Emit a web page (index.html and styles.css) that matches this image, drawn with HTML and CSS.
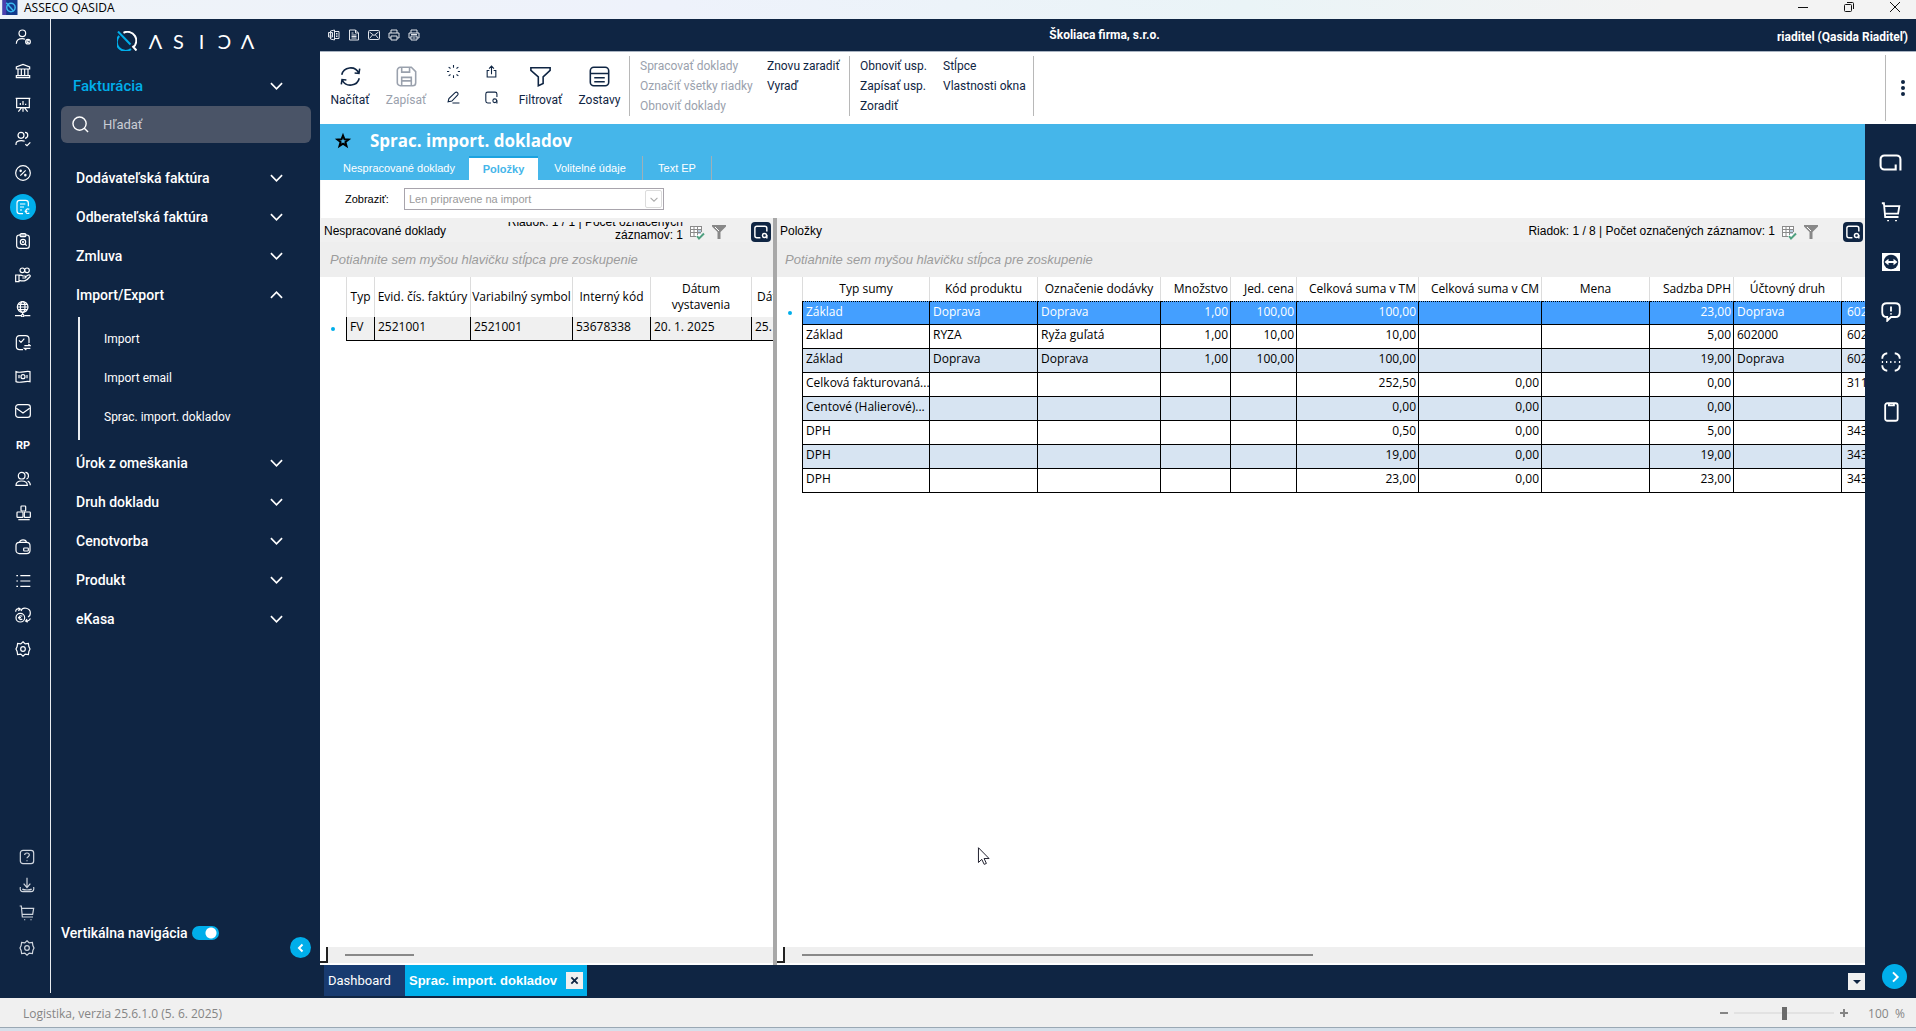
FILE: index.html
```html
<!DOCTYPE html>
<html lang="sk">
<head>
<meta charset="utf-8">
<title>ASSECO QASIDA</title>
<link rel="stylesheet" href="styles.css">
</head>
<body>
<svg class="sprite" aria-hidden="true">
  <symbol id="chev" viewBox="0 0 14 8"><path d="M1 1l6 6 6-6"/></symbol>
  <symbol id="q" viewBox="0 0 20 20"><path d="M2.200 5A8.800 8.800 0 0 0 14 18" stroke="#00aeea" stroke-width="2"/><path d="M1 .5l12.500 13" stroke="#00aeea" stroke-width="2"/><path d="M6.500 1.800A8.800 8.800 0 0 1 16 16.500M15.500 15l4 4.500" stroke="#fff" stroke-width="2"/></symbol>
  <symbol id="i-user" viewBox="0 0 24 24"><circle cx="11" cy="6.500" r="5"/><path d="M2 22c0-5 4-7.500 9-7.500 2 0 3 .3 4 .8"/><circle cx="19.500" cy="19" r="3.500"/><path d="M21 18c-1.500-1.500-3 0-3 1s1.500 2.500 3 1"/></symbol>
  <symbol id="i-bank" viewBox="0 0 24 24"><path d="M2 9V6l10-4 10 4v3zM2 22h20v-3H2zM4.500 19V9M9.500 19V9M14.500 19V9M19.500 19V9"/></symbol>
  <symbol id="i-board" viewBox="0 0 24 24"><path d="M1 2h22M2.500 2v14h19V2M12 16v6M5 22l5-6M19 22l-5-6M8 12V9M12 12V6M16 12v-2"/></symbol>
  <symbol id="i-usercheck" viewBox="0 0 24 24"><circle cx="9" cy="6.500" r="4.500"/><path d="M1.500 21v-1.500c0-3 3-5 8-5 3 0 4 .5 5 1M15 2c5 0 6 8 0 9M15.500 20l2.500 2 5-5"/></symbol>
  <symbol id="i-percent" viewBox="0 0 24 24"><circle cx="12" cy="12" r="11"/><path d="M8 16l8-8"/><circle cx="8.500" cy="8.800" r="1"/><circle cx="15.500" cy="15.200" r="1"/></symbol>
  <symbol id="i-inv" viewBox="0 0 24 24"><path d="M12 22H7c-3 0-4-1.500-4-4V6c0-3 1.500-4 4-4h9c3 0 4 1.500 4 4v5M7.500 7.500h8M7.500 12h6M7.500 16.500h3M21.500 15.500c-4-2-5.500 1-5.500 3s2 4.500 5.500 2.500M14.500 18.500h4"/></symbol>
  <symbol id="i-clip" viewBox="0 0 24 24"><rect x="2.500" y="3" width="19" height="20" rx="4"/><rect x="7.500" y="1" width="9" height="4.500" rx="2"/><circle cx="12" cy="13.500" r="4"/><path d="M15 16.500l2.500 2.500M10.500 13.500h3M12 12v3"/></symbol>
  <symbol id="i-hand" viewBox="0 0 24 24"><circle cx="11" cy="5" r="3.500"/><circle cx="18" cy="5" r="3.500"/><path d="M1 12h5v10H1zM6 13c3-2 5 0 6 .500h3c2 0 2 3 0 3h-4M15 15l5-3c2-1 4 1 2 3-5 6-8 7-16 5"/></symbol>
  <symbol id="i-globe" viewBox="0 0 24 24"><circle cx="11.500" cy="9" r="8"/><ellipse cx="11.500" cy="9" rx="3.500" ry="8"/><path d="M3.500 9h16M5 5h13M5 13h13M11.500 17v3M0 22h9M14 22h9"/><circle cx="11.500" cy="22" r="1.800"/></symbol>
  <symbol id="i-order" viewBox="0 0 24 24"><path d="M12 22H7c-3.500 0-5-1.500-5-5V6c0-3 1.500-5 5-5h9c3.500 0 5 2 5 5v6M6 8l3 3 5-5.500M14 16h9l-3-2.500M23 20h-9l3 2.500"/></symbol>
  <symbol id="i-cash" viewBox="0 0 24 24"><path d="M1.500 4c7 3 14-2 21 0v15c-7-2-14 3-21 0zM6 9v5M18 9v5"/><circle cx="12" cy="11.500" r="3"/></symbol>
  <symbol id="i-mail" viewBox="0 0 24 24"><rect x="1" y="2.500" width="22" height="19" rx="4"/><path d="M2 8l10 7 10-7"/></symbol>
  <symbol id="i-users" viewBox="0 0 24 24"><circle cx="10" cy="7" r="5"/><path d="M1.500 21.500c0-5 4-6.500 8.500-6.500s8.500 1.500 8.500 6.500zM15.500 2c6 0 6 9 1.500 10M19 15c3 1.500 4 3 4 6.500"/></symbol>
  <symbol id="i-boxes" viewBox="0 0 24 24"><rect x="9" y="1.500" width="7" height="7.500" rx="1"/><rect x="3" y="10.500" width="9" height="8" rx="1"/><rect x="14" y="10.500" width="9" height="8" rx="1"/><path d="M5 22h17"/></symbol>
  <symbol id="i-bag" viewBox="0 0 24 24"><rect x="1.500" y="5" width="21" height="17" rx="5"/><path d="M7 5c0-5 10-5 10 0"/><rect x="13" y="13.500" width="7" height="4.500" rx="1"/></symbol>
  <symbol id="i-list" viewBox="0 0 24 24"><path d="M8 4h15M8 12h15M8 20h15M2 4h2.500M2 12h2.500M2 20h2.500"/></symbol>
  <symbol id="i-swap" viewBox="0 0 24 24"><circle cx="8" cy="16" r="6.500"/><path d="M11 14c-3-2-5 0-5 2s2 4 5 2M4.500 16H9M9 6c2-7 14-5 14 3 0 3-1 5-3.500 6M1 7c0-3 2-5 6-4.500M5 1l3 2-3 2.500M16 21c3 0 6 0 7-4M18 18l-2 3 3 2"/></symbol>
  <symbol id="i-gear" viewBox="0 0 24 24"><circle cx="12" cy="12" r="3.500"/><path d="M12 1.200l3.300 3.200 4.800-.8.700 4.800L22.500 12l-1.700 3.600-.7 4.800-4.800-.8L12 22.800l-3.300-3.200-4.800.8-.7-4.800L1.500 12l1.700-3.600.7-4.800 4.800.8z"/></symbol>
  <symbol id="i-help" viewBox="0 0 24 24"><rect x="2" y="2" width="20" height="20" rx="4"/><path d="M8.500 9c0-4 7-4 7 0 0 2.500-3.500 2.500-3.500 5M12 17v1.500"/></symbol>
  <symbol id="i-down" viewBox="0 0 24 24"><path d="M12 1v14M7 10l5 6 5-6M2 15c-1 5 1 7 4 7h12c3 0 5-2 4-7M5 18c2 2 12 2 14 0"/></symbol>
  <symbol id="i-cart" viewBox="0 0 24 24"><path d="M1 1.500h2.500L5 18h16M4 5h18l-1.500 9H5"/><path d="M8.500 21.500v1.500M18 21.500v1.500"/></symbol>
  <symbol id="i-excel" viewBox="0 0 24 24"><path d="M13 2v20l-8-2V4zM13 5h9v14h-9M1 7h8v9H1zM3.500 9.500l3 4M6.500 9.500l-3 4M16 9h3M16 12h3M16 15h3"/></symbol>
  <symbol id="i-doc" viewBox="0 0 24 24"><path d="M3 2h12l6 6v14H3zM15 2v6h6M7 8h4M7 12h10M7 15h10M7 18h10"/></symbol>
  <symbol id="i-env" viewBox="0 0 24 24"><rect x="1" y="3" width="22" height="18" rx="2"/><path d="M3 6l9 7 9-7M3 19l6-7M21 19l-6-7"/></symbol>
  <symbol id="i-print" viewBox="0 0 24 24"><path d="M6 8V2h12v6M6 18H2V8h20v10h-4M6 14h12v8H6z"/></symbol>
  <symbol id="i-print2" viewBox="0 0 24 24"><path d="M6 8V2h12v6M6 18H2V8h20v10h-4M6 14h12v8H6zM9 18h6M6 11h12"/></symbol>
  <symbol id="i-reload" viewBox="0 0 24 24"><path d="M2 10C4 1 17-1 21.500 8M22.500 3l-.8 5.500-5-.500M22 14c-2 9-15 11-19.500 2M1.500 21l.8-5.500 5 .500"/></symbol>
  <symbol id="i-save" viewBox="0 0 24 24"><path d="M5 1.500h12.500l5 5V19a3.500 3.500 0 0 1-3.500 3.500H5A3.500 3.500 0 0 1 1.500 19V5A3.500 3.500 0 0 1 5 1.500zM6.500 2v5h9V2M6.500 22v-9h11v9M6.500 17h11"/></symbol>
  <symbol id="i-spin" viewBox="0 0 24 24"><path d="M12 0v5M12 19v5M0 12h4M20 12h4M3 4l3.500 2.500M17.500 6.500L21 4M3 20l3.500-2.500M17.500 17.500L21 20"/></symbol>
  <symbol id="i-share" viewBox="0 0 24 24"><path d="M8 10H4v12h16V10h-4M12 17V2M7.500 6.500L12 2l4.500 4.500"/></symbol>
  <symbol id="i-pen" viewBox="0 0 24 24"><path d="M2 20l1.500-6L15 3c3-2.500 7 1.500 4.500 4.500L9 18.500zM10 22h13"/></symbol>
  <symbol id="i-view" viewBox="0 0 24 24"><path d="M11 22H5c-2.500 0-3.500-1-3.500-3.500v-13C1.500 3 2.500 2 5 2h13.500C21 2 22 3 22 5.500V11"/><circle cx="18" cy="18" r="3.500"/><path d="M22 17v6"/></symbol>
  <symbol id="i-filter" viewBox="0 0 24 24"><path d="M1 2h22v3l-8 7.500V20l-5.500 2.500V12.500L1 5z"/></symbol>
  <symbol id="i-report" viewBox="0 0 24 24"><rect x="1.500" y="1.500" width="21" height="21" rx="4"/><path d="M2 8.500h20M6 13.500h12M6 18h12"/></symbol>
  <symbol id="i-grid" viewBox="0 0 16 16"><path d="M1 2h11v11H1z" fill="#fff" stroke="none"/><path d="M9 5h3v5H9z" fill="#b9cde0" stroke="none"/><path d="M1 2.500h12M1 5.500h12M1 8.500h11M1 12.500h6M1.500 2v11M5 2v11M8.500 2v9M12.500 2v6" stroke="#8a8a8a" stroke-width="1"/><path d="M8 12l2 2.500 5-5" stroke="#4fa080" stroke-width="2"/></symbol>
  <symbol id="i-funnel" viewBox="0 0 14 14"><path d="M0 0h14v1.500L8.500 7v7H5.500V7L0 1.500z" fill="#888" stroke="none"/><path d="M3 2l4 4" stroke="#fff" stroke-width="1"/></symbol>
  <symbol id="i-card" viewBox="0 0 24 18"><path d="M17.500 11v5.500H5.500a4 4 0 0 1-4-4v-7a4 4 0 0 1 4-4h13a4 4 0 0 1 4 4v12"/></symbol>
  <symbol id="i-tv" viewBox="0 0 18 18"><path d="M0 0h18v18H0z" fill="#fff" stroke="none"/><circle cx="9" cy="9" r="7.300" fill="#0f2543" stroke="none"/><path d="M2.500 9l4-3.200v2.200h5V5.800l4 3.200-4 3.200V10h-5v2.200z" fill="#fff" stroke="none"/></symbol>
  <symbol id="i-alert" viewBox="0 0 24 24"><path d="M7 1.500h10c4 0 5.500 1.500 5.500 5v6c0 4-1.500 5.500-5.500 5.500h-5l-4.500 4.500V18C3 18 1.500 16 1.500 12.500v-6c0-3.500 1.500-5 5.500-5zM12 5.500v6M12 13.500v1.500"/></symbol>
  <symbol id="i-scan" viewBox="0 0 24 24"><path d="M1.500 8c0-4 2-6 6-6.500M16.500 1.500c4 .5 6 2.500 6 6.500M22.500 16c0 4-2 6-6 6.500M7.500 22.500c-4-.5-6-2.500-6-6.500M1 12h1.500M6 12h1.500M11 12h1.500M16 12h1.500M21.500 12H23"/></symbol>
  <symbol id="i-phone" viewBox="0 0 24 24"><rect x="5" y="1.500" width="15" height="21" rx="2.500"/><path d="M9.500 2v2h6V2"/></symbol>
</svg>

<header class="titlebar">
  <svg class="app-icon" viewBox="0 0 16 16"><path d="M0 0h16v16H0z" fill="#123a8c"/><path d="M0 0h4v16H0z" fill="#4a3fae"/><circle cx="9" cy="8" r="4.500" fill="none" stroke="#39b8ee" stroke-width="1.500"/><path d="M4 3l8 9" stroke="#39b8ee" stroke-width="1.500"/></svg>
  <span class="app-name">ASSECO QASIDA</span>
  <button class="winbtn" aria-label="Minimalizovať"><svg viewBox="0 0 12 12"><path d="M1 6.500h10"/></svg></button>
  <button class="winbtn" aria-label="Obnoviť"><svg viewBox="0 0 12 12"><rect x="1.500" y="3.500" width="7" height="7" rx="1"/><path d="M4 1.500h5.500a1 1 0 0 1 1 1V8"/></svg></button>
  <button class="winbtn" aria-label="Zavrieť"><svg viewBox="0 0 12 12"><path d="M1 1l10 10M11 1L1 11"/></svg></button>
</header>

<div class="shell">
  <nav class="rail" aria-label="Moduly">
    <div class="rail-line">
      <button class="ric"><svg><use href="#i-user"/></svg></button>
      <button class="ric"><svg><use href="#i-bank"/></svg></button>
      <button class="ric"><svg><use href="#i-board"/></svg></button>
      <button class="ric"><svg><use href="#i-usercheck"/></svg></button>
      <button class="ric"><svg><use href="#i-percent"/></svg></button>
      <button class="ric active"><svg><use href="#i-inv"/></svg></button>
      <button class="ric"><svg><use href="#i-clip"/></svg></button>
      <button class="ric"><svg><use href="#i-hand"/></svg></button>
      <button class="ric"><svg><use href="#i-globe"/></svg></button>
      <button class="ric"><svg><use href="#i-order"/></svg></button>
      <button class="ric"><svg><use href="#i-cash"/></svg></button>
      <button class="ric"><svg><use href="#i-mail"/></svg></button>
      <button class="ric">RP</button>
      <button class="ric"><svg><use href="#i-users"/></svg></button>
      <button class="ric"><svg><use href="#i-boxes"/></svg></button>
      <button class="ric"><svg><use href="#i-bag"/></svg></button>
      <button class="ric"><svg><use href="#i-list"/></svg></button>
      <button class="ric"><svg><use href="#i-swap"/></svg></button>
      <button class="ric"><svg><use href="#i-gear"/></svg></button>
      <div class="rail-bottom">
        <button class="ric"><svg><use href="#i-help"/></svg></button>
        <button class="ric"><svg><use href="#i-down"/></svg></button>
        <button class="ric"><svg><use href="#i-cart"/></svg></button>
        <button class="ric last"><svg><use href="#i-gear"/></svg></button>
      </div>
    </div>
  </nav>

  <aside class="menu">
    <div class="logo" role="img" aria-label="QASIDA"><svg><use href="#q"/></svg><span>Λ</span><span>S</span><span>I</span><span>Ɔ</span><span>Λ</span></div>
    <button class="menu-title"><span>Fakturácia</span><svg class="chev"><use href="#chev"/></svg></button>
    <label class="search"><svg viewBox="0 0 18 18"><circle cx="8" cy="8" r="7"/><path d="M13 13l4 4"/></svg><input type="search" placeholder="Hľadať" aria-label="Hľadať"></label>
    <div class="menu-list">
      <button class="mi"><span>Dodávateľská faktúra</span><svg class="chev"><use href="#chev"/></svg></button>
      <button class="mi"><span>Odberateľská faktúra</span><svg class="chev"><use href="#chev"/></svg></button>
      <button class="mi"><span>Zmluva</span><svg class="chev"><use href="#chev"/></svg></button>
      <button class="mi"><span>Import/Export</span><svg class="chev up"><use href="#chev"/></svg></button>
      <div class="sub">
        <a href="#">Import</a>
        <a href="#">Import email</a>
        <a href="#">Sprac. import. dokladov</a>
      </div>
      <button class="mi"><span>Úrok z omeškania</span><svg class="chev"><use href="#chev"/></svg></button>
      <button class="mi"><span>Druh dokladu</span><svg class="chev"><use href="#chev"/></svg></button>
      <button class="mi"><span>Cenotvorba</span><svg class="chev"><use href="#chev"/></svg></button>
      <button class="mi"><span>Produkt</span><svg class="chev"><use href="#chev"/></svg></button>
      <button class="mi"><span>eKasa</span><svg class="chev"><use href="#chev"/></svg></button>
    </div>
    <div class="menu-foot">
      <label class="vnav"><span>Vertikálna navigácia</span><input type="checkbox" checked></label>
      <button class="round collapse" aria-label="Zbaliť"><svg viewBox="0 0 12 12"><path d="M7.500 2.500L4 6l3.500 3.500"/></svg></button>
    </div>
  </aside>

  <div class="work">
    <div class="topbar">
      <div class="quick">
        <button><svg><use href="#i-excel"/></svg></button><button><svg><use href="#i-doc"/></svg></button><button><svg><use href="#i-env"/></svg></button><button><svg><use href="#i-print"/></svg></button><button><svg><use href="#i-print2"/></svg></button>
      </div>
      <div class="firm">Školiaca firma, s.r.o.</div>
      <div class="who">riaditel (Qasida Riaditeľ)</div>
    </div>

    <div class="toolbar">
      <button class="big"><svg><use href="#i-reload"/></svg><span>Načítať</span></button>
      <button class="big off" disabled><svg><use href="#i-save"/></svg><span>Zapísať</span></button>
      <div class="smalls">
        <button><svg><use href="#i-spin"/></svg></button><button><svg><use href="#i-share"/></svg></button>
        <button><svg><use href="#i-pen"/></svg></button><button><svg><use href="#i-view"/></svg></button>
      </div>
      <button class="big"><svg><use href="#i-filter"/></svg><span>Filtrovať</span></button>
      <button class="big"><svg><use href="#i-report"/></svg><span>Zostavy</span></button>
      <div class="cmds">
        <div class="cmdcol c1"><button disabled>Spracovať doklady</button><button disabled>Označiť všetky riadky</button><button disabled>Obnoviť doklady</button></div>
        <div class="cmdcol c2"><button>Znovu zaradiť</button><button>Vyraď</button></div>
      </div>
      <div class="cmds">
        <div class="cmdcol c3"><button>Obnoviť usp.</button><button>Zapísať usp.</button><button>Zoradiť</button></div>
        <div class="cmdcol c4"><button>Stĺpce</button><button>Vlastnosti okna</button></div>
      </div>
      <div class="cmds rest"></div>
      <button class="more" aria-label="Viac"><i></i><i></i><i></i></button>
    </div>

    <div class="lower">
      <main class="main">
        <div class="band">
          <div class="band-title"><svg class="star" viewBox="0 0 14 14"><path d="M7 1.500l1.500 3.800 4 .2-3.100 2.500 1.100 3.900L7 9.700l-3.500 2.200 1.100-3.900L1.500 5.500l4-.2z"/></svg><h1>Sprac. import. dokladov</h1></div>
          <div class="tabs" role="tablist">
            <button role="tab" class="t1">Nespracované doklady</button><button role="tab" class="t2 on" aria-selected="true">Položky</button><button role="tab" class="t3">Volitelné údaje</button><button role="tab" class="t4">Text EP</button>
          </div>
        </div>
        <div class="filter">
          <label for="show">Zobraziť:</label>
          <div class="sel"><select id="show" disabled><option>Len pripravene na import</option></select><span class="drop"><svg class="chev"><use href="#chev"/></svg></span></div>
        </div>

        <div class="panes">
          <section class="pane left">
            <div class="phead"><h2>Nespracované doklady</h2><div class="pinfo">Riadok: 1 / 1 | Počet označených záznamov: 1</div><svg class="pgrid"><use href="#i-grid"/></svg><svg class="pfun"><use href="#i-funnel"/></svg><button class="pview"><svg><use href="#i-view"/></svg></button></div>
            <div class="group">Potiahnite sem myšou hlavičku stĺpca pre zoskupenie</div>
            <div class="tablebox">
              <table class="lt">
                <colgroup><col class="w27"><col class="w28"><col class="w96"><col class="w102"><col class="w78"><col class="w101"><col class="w101"></colgroup>
                <thead><tr><th></th><th>Typ</th><th>Evid. čís. faktúry</th><th>Variabilný symbol</th><th>Interný kód</th><th>Dátum<br>vystavenia</th><th class="l">Dátum</th></tr></thead>
                <tbody><tr><td class="mark"><i></i></td><td>FV</td><td>2521001</td><td>2521001</td><td>53678338</td><td>20. 1. 2025</td><td>25. 1. 2025</td></tr></tbody>
              </table>
            </div>
            <div class="hscroll"><b class="grip"></b><i class="thumb"></i></div>
          </section>
          <section class="pane right">
            <div class="phead"><h2>Položky</h2><div class="pinfo">Riadok: 1 / 8 | Počet označených záznamov: 1</div><svg class="pgrid"><use href="#i-grid"/></svg><svg class="pfun"><use href="#i-funnel"/></svg><button class="pview"><svg><use href="#i-view"/></svg></button></div>
            <div class="group">Potiahnite sem myšou hlavičku stĺpca pre zoskupenie</div>
            <div class="tablebox">
              <table class="rt">
                <colgroup><col class="w26"><col class="w127"><col class="w108"><col class="w123"><col class="w70"><col class="w66"><col class="w122"><col class="w123"><col class="w108"><col class="w84"><col class="w108"><col class="w108"></colgroup>
                <thead><tr><th></th><th>Typ sumy</th><th>Kód produktu</th><th>Označenie dodávky</th><th class="n">Množstvo</th><th class="n">Jed. cena</th><th class="n">Celková suma v TM</th><th class="n">Celková suma v CM</th><th>Mena</th><th class="n">Sadzba DPH</th><th>Účtovný druh</th><th></th></tr></thead>
                <tbody>
                <tr class="cur"><td class="mark"><i></i></td><td>Základ</td><td>Doprava</td><td>Doprava</td><td class="n">1,00</td><td class="n">100,00</td><td class="n">100,00</td><td></td><td></td><td class="n">23,00</td><td>Doprava</td><td class="a">602000</td></tr>
                <tr><td></td><td>Základ</td><td>RYZA</td><td>Ryža guľatá</td><td class="n">1,00</td><td class="n">10,00</td><td class="n">10,00</td><td></td><td></td><td class="n">5,00</td><td>602000</td><td class="a">602000</td></tr>
                <tr class="alt"><td></td><td>Základ</td><td>Doprava</td><td>Doprava</td><td class="n">1,00</td><td class="n">100,00</td><td class="n">100,00</td><td></td><td></td><td class="n">19,00</td><td>Doprava</td><td class="a">602000</td></tr>
                <tr><td></td><td>Celková fakturovaná...</td><td></td><td></td><td></td><td></td><td class="n">252,50</td><td class="n">0,00</td><td></td><td class="n">0,00</td><td></td><td class="a">311000</td></tr>
                <tr class="alt"><td></td><td>Centové (Halierové)...</td><td></td><td></td><td></td><td></td><td class="n">0,00</td><td class="n">0,00</td><td></td><td class="n">0,00</td><td></td><td></td></tr>
                <tr><td></td><td>DPH</td><td></td><td></td><td></td><td></td><td class="n">0,50</td><td class="n">0,00</td><td></td><td class="n">5,00</td><td></td><td class="a">343000</td></tr>
                <tr class="alt"><td></td><td>DPH</td><td></td><td></td><td></td><td></td><td class="n">19,00</td><td class="n">0,00</td><td></td><td class="n">19,00</td><td></td><td class="a">343000</td></tr>
                <tr><td></td><td>DPH</td><td></td><td></td><td></td><td></td><td class="n">23,00</td><td class="n">0,00</td><td></td><td class="n">23,00</td><td></td><td class="a">343000</td></tr>
                </tbody>
              </table>
            </div>
            <div class="hscroll"><b class="grip"></b><i class="thumb"></i></div>
          </section>
        </div>

        <div class="wintabs">
          <button class="wt">Dashboard</button>
          <div class="wt on"><span>Sprac. import. dokladov</span><button class="x" aria-label="Zavrieť"><svg viewBox="0 0 10 10"><path d="M1.500 1.500l7 7M8.500 1.500l-7 7"/></svg></button></div>
          <button class="wmore" aria-label="Okná"><i></i></button>
        </div>
      </main>
      <nav class="rrail" aria-label="Nástroje">
        <button><svg class="card"><use href="#i-card"/></svg></button>
        <button><svg><use href="#i-cart"/></svg></button>
        <button><svg class="tv"><use href="#i-tv"/></svg></button>
        <button><svg><use href="#i-alert"/></svg></button>
        <button><svg><use href="#i-scan"/></svg></button>
        <button><svg><use href="#i-phone"/></svg></button>
        <button class="round expand" aria-label="Rozbaliť"><svg viewBox="0 0 12 12"><path d="M4.500 2.500L8 6 4.500 9.500"/></svg></button>
      </nav>
    </div>
  </div>
</div>

<footer class="status">
  <span class="ver">Logistika, verzia 25.6.1.0 (5. 6. 2025)</span>
  <button class="zb" aria-label="Zmenšiť"><svg viewBox="0 0 10 10"><path d="M1 5h8"/></svg></button>
  <input type="range" min="0" max="200" value="100" aria-label="Lupa">
  <button class="zb" aria-label="Zväčšiť"><svg viewBox="0 0 10 10"><path d="M1 5h8M5 1v8"/></svg></button>
  <span class="zv">100</span><span class="zp">%</span>
</footer>
<svg class="cursor" viewBox="0 0 13 20"><path d="M.5.500v16l3.600-3.400 2.600 5.400 2.400-1-2.500-5.300H12z" fill="#fff" stroke="#101020"/></svg>
</body>
</html>
```

FILE: styles.css
```css
:root {
  --navy: #0f2543;
  --cyan: #00aeea;
  --band: #45b6ea;
  --grey: #f0f0f0;
}
* { box-sizing: border-box; }
body {
  margin: 0;
  height: 100vh;
  display: flex;
  flex-direction: column;
  overflow: hidden;
  font: 12px Roboto, sans-serif;
  color: #000;
  background: #fff;
}
button { border: 0; padding: 0; margin: 0; background: none; color: inherit; font: inherit; display: flex; align-items: center; text-align: left; white-space: nowrap; }
a { color: inherit; text-decoration: none; }
h1, h2 { margin: 0; font-weight: 400; }
svg { display: block; fill: none; stroke: currentColor; stroke-width: 2; flex: none; overflow: visible; }
.sprite { position: absolute; width: 0; height: 0; }

.titlebar { height: 19px; display: flex; align-items: flex-start; background: linear-gradient(90deg, #eef3f8, #eef2fb 35%, #eaf4f7 65%, #f3f3f3 87%); padding-right: 15px; font: 12px/15px "Open Sans", sans-serif; }
.app-icon { width: 16px; height: 15px; margin: 0 6px 0 2px; stroke: none; }
.app-name { flex: 1; }
.winbtn { width: 12px; height: 13px; margin-left: 34px; color: #111; }
.winbtn svg { width: 12px; height: 12px; stroke-width: 1; }

.shell { flex: 1; min-height: 0; display: flex; background: var(--navy); color: #fff; }
.rail { width: 51px; padding-bottom: 5px; flex: none; }
.rail-line { height: 100%; border-right: 1px solid #e8ecf0; display: flex; flex-direction: column; padding: 1px 0 31px 10px; }
.ric { width: 26px; height: 34px; justify-content: center; font-size: 11px; font-weight: 700; flex: none; }
.ric svg { width: 16px; height: 16px; stroke-width: 1.800; }
.ric.active { height: 26px; margin: 4px 0; border-radius: 13px; background: var(--cyan); }
.rail-bottom { margin-top: auto; padding-left: 4px; }
.rail-bottom .ric { height: 28px; color: #d0d6de; }
.rail-bottom .last { margin-top: 7px; }

.menu { width: 269px; flex: none; padding: 11px 9px 40px 10px; display: flex; flex-direction: column; }
.logo { display: flex; align-items: center; height: 22px; padding-left: 56px; font: 20px/22px Lato, "DejaVu Sans", sans-serif; }
.logo svg { width: 20px; height: 20px; margin-right: 7px; }
.logo span { width: 23px; text-align: center; }
.menu-title { height: 40px; margin-top: 14px; padding: 0 28px 0 12px; justify-content: space-between; font-size: 15px; font-weight: 500; color: var(--cyan); }
.chev { width: 13px; height: 8px; color: #fff; stroke-width: 1.800; }
.chev.up { transform: rotate(180deg); }
.search { height: 37px; display: flex; align-items: center; gap: 14px; padding: 0 11px; border-radius: 6px; background: #4a5467; }
.search svg { width: 17px; height: 17px; stroke-width: 1.500; }
.search input { flex: 1; min-width: 0; border: 0; padding: 0; background: none; font: 13px Roboto, sans-serif; color: #fff; outline: 0; }
.search input::placeholder { color: #c9cdd4; opacity: 1; }
.menu-list { padding: 15px 28px 0 15px; }
.mi { width: 100%; height: 39px; justify-content: space-between; font-size: 14px; font-weight: 500; }
.sub { margin: 3px 0 3px 2px; border-left: 2px solid #e8ecf0; padding: 3px 0 3px 24px; }
.sub a { display: block; font-size: 12px; line-height: 39px; }
.menu-foot { margin-top: auto; display: flex; align-items: flex-start; justify-content: space-between; }
.vnav { display: flex; align-items: center; gap: 4px; font-size: 14px; font-weight: 500; line-height: 16px; }
.vnav input { appearance: none; margin: 0; width: 27px; height: 14px; border-radius: 7px; background: radial-gradient(circle at 19px 7px, #fff 5px, var(--cyan) 6px); }
.round { border-radius: 50%; background: var(--cyan); justify-content: center; }
.round svg { stroke-width: 2; width: 12px; height: 12px; }
.collapse { width: 21px; height: 21px; margin-top: 12px; }

.work { flex: 1; min-width: 0; display: flex; flex-direction: column; }
.topbar { height: 33px; display: grid; grid-template-columns: 1fr auto 1fr; align-items: center; padding: 0 35px 0 8px; border-bottom: 1px solid #aab4c2; font-weight: 700; }
.quick { display: flex; gap: 8px; color: #e0e4ea; }
.quick svg { width: 12px; height: 12px; stroke-width: 2; }
.who { text-align: right; padding-top: 4px; margin-right: -27px; }

.toolbar { height: 72px; display: flex; background: #fff; color: var(--navy); padding: 4px 0 0 2px; }
.big { width: 56px; flex-direction: column; padding-top: 10px; gap: 3px; font-size: 12px; line-height: 20px; }
.big svg { width: 21px; height: 21px; stroke-width: 1.800; }
.big.off, .cmdcol button:disabled { color: #9aa1ad; }
.smalls { display: grid; grid-template-columns: 38px 39px; grid-auto-rows: 26px; padding: 2px 0 0; }
.smalls button { justify-content: center; }
.smalls svg { width: 13px; height: 13px; stroke-width: 2; }
.smalls + .big, .smalls + .big + .big { width: 59px; }
.cmds { display: flex; height: 60px; padding-left: 10px; border-left: 1px solid #b8b8b8; }
.cmdcol button { height: 20px; font-size: 12px; }
.c1 { width: 127px; }
.c2 { width: 82px; }
.c3 { width: 83px; }
.c4 { width: 90px; }
.rest { flex: 1; }
.more { width: 31px; height: 66px; border-left: 1px solid #b8b8b8; flex-direction: column; justify-content: center; gap: 2px; padding-left: 4px; margin-top: -1px; }
.more i { width: 4px; height: 4px; border-radius: 50%; background: var(--navy); }

.lower { flex: 1; min-height: 0; display: flex; }
.main { flex: 1; min-width: 0; display: flex; flex-direction: column; color: #000; background: #fff; }
.band { background: var(--band); color: #fff; height: 56px; }
.band-title { height: 32px; display: flex; align-items: center; gap: 20px; padding: 2px 0 0 16px; }
.star { width: 14px; height: 14px; color: #000; stroke-width: 2; }
h1 { font: 700 17px/24px "Open Sans", sans-serif; }
.tabs { display: flex; height: 24px; padding-left: 9px; font: 11px "Liberation Sans", sans-serif; }
.tabs button { justify-content: center; }
.t1 { width: 140px; }
.t2 { width: 69px; }
.tabs .on { background: #fff; color: var(--band); font-weight: 700; border-top: 2px solid #1ba3e0; }
.t3 { width: 105px; border-right: 1px solid #9eb0b8; }
.t4 { width: 69px; border-right: 1px solid #9eb0b8; }
.filter { height: 38px; display: flex; align-items: center; padding-left: 24px; border-left: 1px solid var(--grey); font: 11px "Liberation Sans", sans-serif; }
.filter label { width: 59px; }
.sel { display: flex; width: 260px; height: 22px; border: 1px solid #a8a4ac; padding: 1px; }
.sel select { appearance: none; flex: 1; border: 0; padding: 0 3px; margin: 0; background: #fff; font: inherit; color: #9a9a9a; opacity: 1; }
.drop { width: 17px; border: 1px solid #dcdcdc; border-radius: 2px; display: flex; align-items: center; justify-content: center; }
.drop .chev { width: 8px; height: 5px; color: #aaa; }

.panes { flex: 1; min-height: 0; display: flex; }
.pane { display: flex; flex-direction: column; min-width: 0; }
.pane.left { flex: 0 0 457px; border-right: 4px solid #a8a8a8; }
.pane.right { flex: 1; }
.phead { height: 24px; background: var(--grey); display: flex; align-items: center; padding: 3px 2px 0 4px; font: 12px/13px "Liberation Sans", sans-serif; }
.right .phead { padding-left: 3px; }
h2 { font: inherit; white-space: nowrap; }
.pinfo { margin-left: auto; text-align: right; height: 20px; display: flex; align-items: flex-end; justify-content: flex-end; overflow: hidden; }
.left .pinfo { width: 190px; }
.right .pinfo { padding-bottom: 4px; white-space: nowrap; }
.pgrid { width: 16px; height: 16px; margin-left: 6px; }
.pfun { width: 14px; height: 14px; margin: 0 25px 0 7px; }
.pview { width: 20px; height: 20px; border-radius: 4px; background: var(--navy); color: #fff; justify-content: center; }
.pview svg { width: 14px; height: 14px; stroke-width: 2.500; }
.group { height: 35px; background: #eee; color: #9c9c9c; font: italic 13px/35px "Liberation Sans", sans-serif; padding-left: 10px; }
.right .group { padding-left: 8px; }
.tablebox { flex: 1; min-height: 0; overflow: hidden; font: 12px/16px "Open Sans", sans-serif; }
table { table-layout: fixed; border-collapse: separate; border-spacing: 0; width: 0; font: inherit; }
.w26 { width: 26px; } .w27 { width: 27px; } .w28 { width: 28px; } .w66 { width: 66px; } .w70 { width: 70px; }
.w78 { width: 78px; } .w84 { width: 84px; } .w96 { width: 96px; } .w101 { width: 101px; } .w102 { width: 102px; }
.w108 { width: 108px; } .w122 { width: 122px; } .w123 { width: 123px; } .w127 { width: 127px; }
th { height: 24px; padding: 0 1px; font-weight: 400; border-right: 1px solid #dcdcdc; overflow: hidden; white-space: nowrap; }
.lt th { height: 40px; }
th.l { text-align: left; padding-left: 5px; }
.n { text-align: right; padding-right: 2px; }
td { height: 24px; padding: 0 0 3px 3px; border-right: 1px solid #000; border-bottom: 1px solid #000; white-space: nowrap; overflow: hidden; }
td:first-child { background: #fff; border-bottom: 0; padding: 0; }
.a { padding-left: 5px; }
.lt td { background: var(--grey); }
.lt td:first-child { background: #fff; }
.alt td { background: #d7e4f2; }
.cur td { background: #449fff; color: #fff; border-top: 1px dotted #000; }
.alt td:first-child, .cur td:first-child { background: #fff; border-top: 0; }
.mark i { display: block; width: 4px; height: 4px; margin-left: 11px; border-radius: 50%; background: var(--cyan); }
.hscroll { height: 18px; border-bottom: 2px solid #fff; background: #efefef; display: flex; align-items: center; }
.grip { width: 8px; height: 16px; background: #fff; border-right: 2px solid #222; border-bottom: 2px solid #222; }
.thumb { height: 2px; width: 69px; margin-left: 17px; background: #888; }
.right .thumb { width: 47%; }

.wintabs { height: 33px; background: var(--navy); color: #fff; display: flex; align-items: flex-start; padding-left: 4px; font-size: 13px; }
.wt { height: 31px; width: 81px; padding: 0 4px; background: #183b70; }
.wt.on { width: 182px; background: var(--cyan); display: flex; align-items: center; justify-content: space-between; font: 700 13px "Liberation Sans", sans-serif; white-space: nowrap; }
.x { width: 17px; height: 17px; background: #f0f0f0; color: var(--navy); justify-content: center; }
.x svg { width: 9px; height: 9px; stroke-width: 2; }
.wmore { margin: 8px 0 0 auto; width: 17px; height: 17px; background: #f0f0f0; justify-content: center; }
.wmore i { border: 4px solid transparent; border-top-color: var(--navy); border-bottom: 0; }

.rrail { width: 51px; flex: none; display: flex; flex-direction: column; align-items: center; padding: 13px 0 9px; }
.rrail button { width: 26px; height: 50px; justify-content: center; }
.rrail svg { width: 20px; height: 20px; stroke-width: 2.200; }
.rrail .card { width: 23px; height: 17px; }
.rrail .tv { width: 18px; height: 18px; }
.rrail .expand { width: 25px; height: 25px; margin: auto 0 0 8px; }
.rrail .round svg { width: 16px; height: 16px; stroke-width: 1.500; }

.status { height: 33px; background: #f0f0f0; border-bottom: 3px solid #d5e0ea; box-shadow: inset 0 -1px #9aa8b4; display: flex; align-items: center; padding: 0 11px 0 23px; color: #858585; font: 12px "Open Sans", sans-serif; }
.ver { flex: 1; }
.zb svg { width: 10px; height: 10px; stroke-width: 2; }
.status input { appearance: none; width: 100px; height: 14px; margin: 0 5px; background: linear-gradient(#e2e2e2, #e2e2e2) center / 100% 2px no-repeat; }
.status input::-webkit-slider-thumb { appearance: none; width: 5px; height: 13px; background: #6b6b6b; }
.zv { margin-left: 19px; width: 27px; }
.cursor { position: absolute; left: 978px; top: 847px; width: 12px; height: 19px; stroke-width: 1; }
```
